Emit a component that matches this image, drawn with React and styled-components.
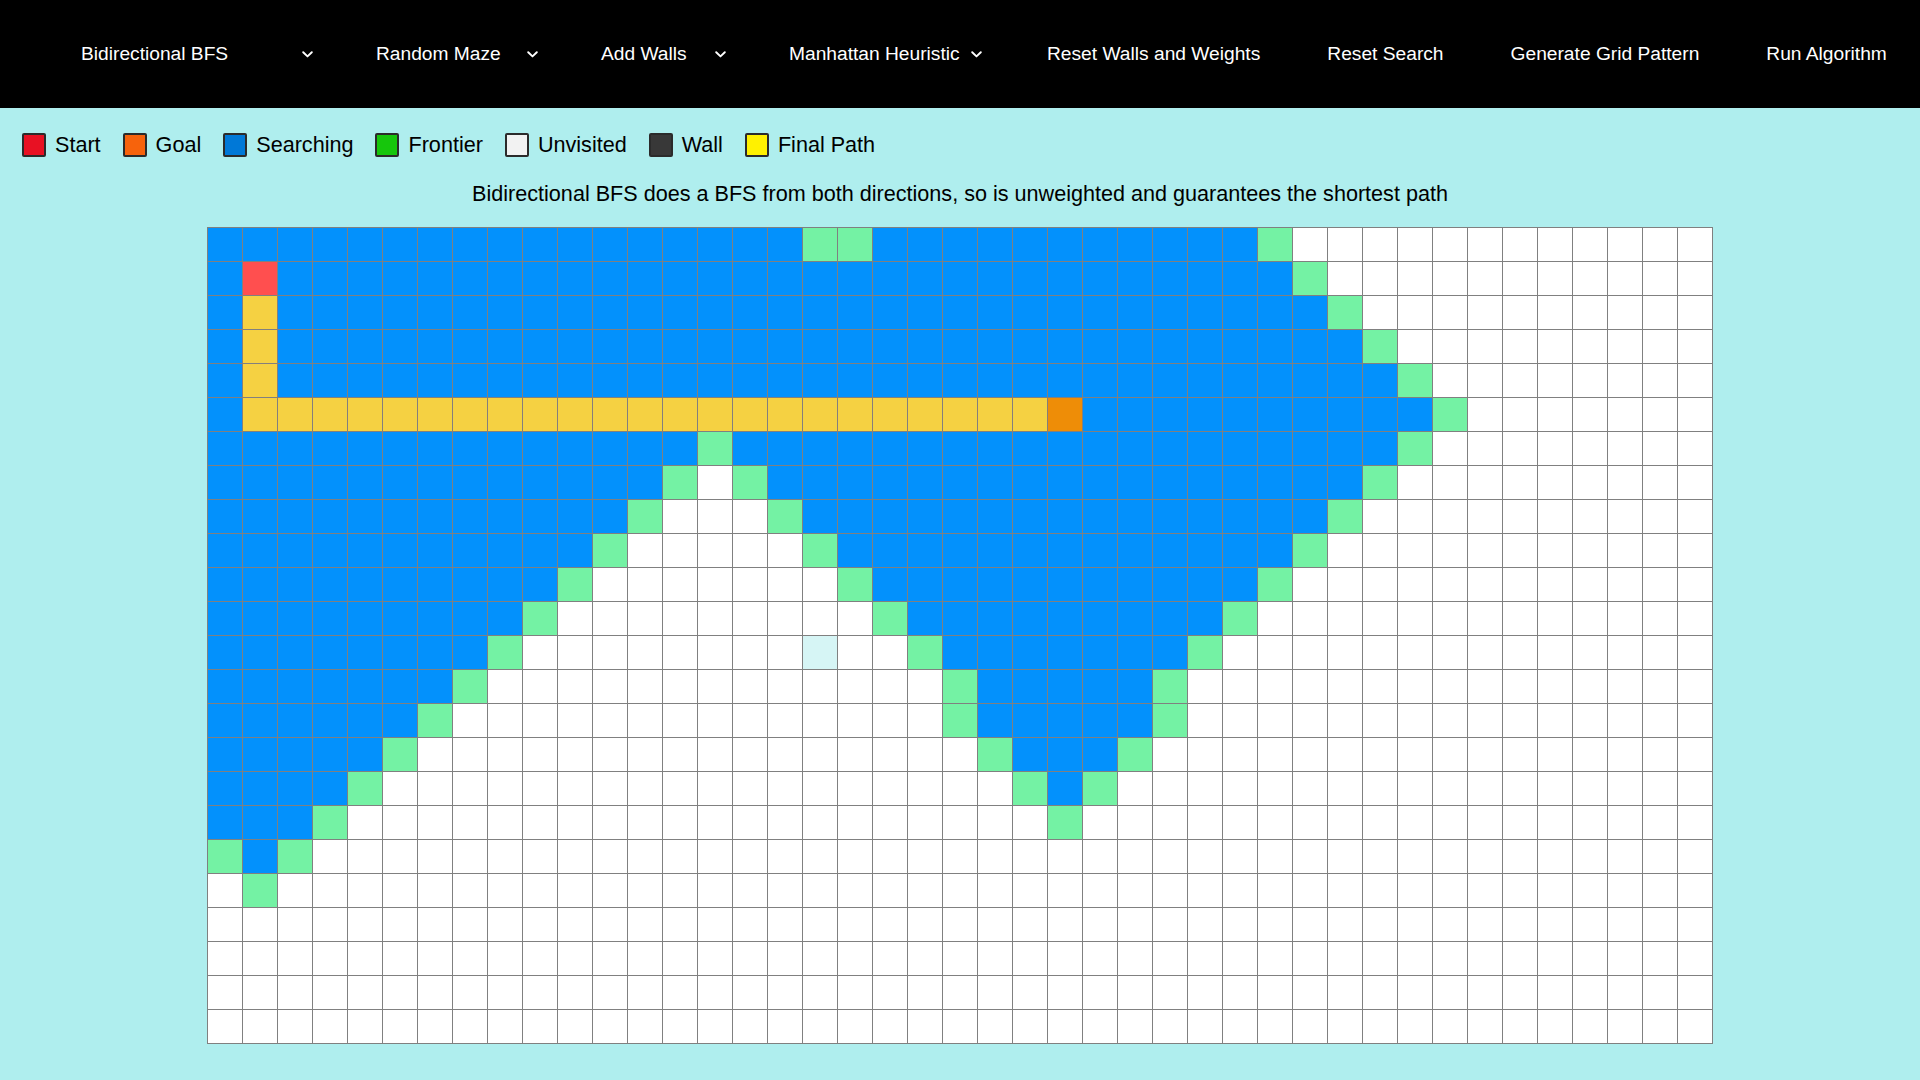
import React from "react";
import styled, { createGlobalStyle } from "styled-components";

const GlobalStyle = createGlobalStyle`
  html, body {
    margin: 0;
    padding: 0;
    background-color: #afeeee;
    font-family: "Liberation Sans", Arial, sans-serif;
    min-height: 100%;
  }
`;

const Page = styled.div`
  min-height: 1080px;
  background-color: #afeeee;
  padding-bottom: 36px;
`;

const NavBar = styled.nav`
  height: 108px;
  background-color: #000;
  display: flex;
  align-items: center;
  padding-left: 81px;
  gap: 63px;
  color: white;
  font-size: 19.2px;
`;

const Dropdown = styled.div`
  width: ${(p) => p.$w}px;
  display: flex;
  align-items: center;
  justify-content: space-between;
  cursor: pointer;
  white-space: nowrap;
`;

const NavButton = styled.div`
  padding: 0 2px;
  cursor: pointer;
  white-space: nowrap;
`;

const Legend = styled.div`
  display: flex;
  align-items: center;
  gap: 22px;
  height: 24px;
  margin-top: 25px;
  padding-left: 22px;
  font-size: 21.6px;
  color: #000;
`;

const LegendItem = styled.div`
  display: flex;
  align-items: center;
  gap: 9px;
`;

const Swatch = styled.span`
  display: block;
  width: 24px;
  height: 24px;
  box-sizing: border-box;
  border: 2px solid #2b2b2b;
  border-radius: 2px;
  background-color: ${(p) => p.$color};
`;

const Description = styled.p`
  margin: 24px 0 0;
  text-align: center;
  font-size: 21.6px;
  color: #000;
`;

const Grid = styled.div`
  display: grid;
  grid-template-columns: repeat(43, 34px);
  grid-auto-rows: 33px;
  gap: 1px;
  width: max-content;
  margin: 20px auto 0;
  background-color: #808080;
  border: 1px solid #808080;
`;

const cellColors = {
  B: "#0391fc",
  G: "#74f2a4",
  Y: "#f5d142",
  S: "#ff4f4f",
  E: "#ee8d07",
  L: "#d6f5f5",
  ".": "#ffffff",
};

const Cell = styled.div`
  background-color: ${(p) => cellColors[p.$kind]};
`;

const Chevron = () => (
  <svg width="11" height="7" viewBox="0 0 11 7">
    <polyline
      points="1.2,1.2 5.5,5.4 9.8,1.2"
      fill="none"
      stroke="white"
      strokeWidth="1.9"
      strokeLinecap="round"
      strokeLinejoin="round"
    />
  </svg>
);

// run-length rows: letter followed by count
const rowSpecs = [
  "B17G2B11G1.12",
  "B1S1B29G1.11",
  "B1Y1B30G1.10",
  "B1Y1B31G1.9",
  "B1Y1B32G1.8",
  "B1Y23E1B10G1.7",
  "B14G1B19G1.8",
  "B13G1.1G1B17G1.9",
  "B12G1.3G1B15G1.10",
  "B11G1.5G1B13G1.11",
  "B10G1.7G1B11G1.12",
  "B9G1.9G1B9G1.13",
  "B8G1.8L1.2G1B7G1.14",
  "B7G1.13G1B5G1.15",
  "B6G1.14G1B5G1.15",
  "B5G1.16G1B3G1.16",
  "B4G1.18G1B1G1.17",
  "B3G1.20G1.18",
  "G1B1G1.40",
  ".1G1.41",
  ".43",
  ".43",
  ".43",
  ".43",
];

const parseRow = (spec) => {
  const out = [];
  const re = /([A-Z.])(\d+)/g;
  let m;
  while ((m = re.exec(spec))) {
    for (let i = 0; i < Number(m[2]); i++) out.push(m[1]);
  }
  return out;
};

const cells = rowSpecs.map(parseRow);

const legendItems = [
  ["Start", "#e81123"],
  ["Goal", "#f7630c"],
  ["Searching", "#0078d7"],
  ["Frontier", "#16c60c"],
  ["Unvisited", "#f2f2f2"],
  ["Wall", "#383838"],
  ["Final Path", "#fff100"],
];

export default function App() {
  return (
    <Page>
      <GlobalStyle />
      <NavBar>
        <Dropdown $w={232}>
          <span>Bidirectional BFS</span>
          <Chevron />
        </Dropdown>
        <Dropdown $w={162}>
          <span>Random Maze</span>
          <Chevron />
        </Dropdown>
        <Dropdown $w={125}>
          <span>Add Walls</span>
          <Chevron />
        </Dropdown>
        <Dropdown $w={193}>
          <span>Manhattan Heuristic</span>
          <Chevron />
        </Dropdown>
        <NavButton>Reset Walls and Weights</NavButton>
        <NavButton>Reset Search</NavButton>
        <NavButton>Generate Grid Pattern</NavButton>
        <NavButton>Run Algorithm</NavButton>
      </NavBar>

      <Legend>
        {legendItems.map(([label, color]) => (
          <LegendItem key={label}>
            <Swatch $color={color} />
            <span>{label}</span>
          </LegendItem>
        ))}
      </Legend>

      <Description>
        Bidirectional BFS does a BFS from both directions, so is unweighted and
        guarantees the shortest path
      </Description>

      <Grid>
        {cells.map((row, r) =>
          row.map((kind, c) => <Cell key={`${r}-${c}`} $kind={kind} />)
        )}
      </Grid>
    </Page>
  );
}
